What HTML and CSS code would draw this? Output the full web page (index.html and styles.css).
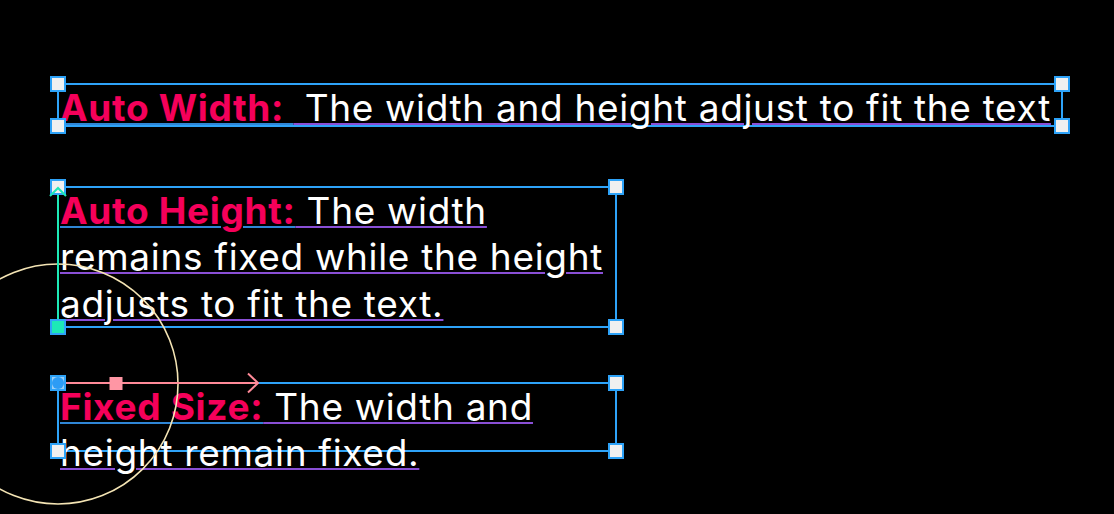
FILE: index.html
```html
<!DOCTYPE html>
<html>
<head>
<meta charset="utf-8">
<link rel="stylesheet" href="styles.css">
</head>
<body>
<div class="canvas">
  <div class="frame frame-auto-width">
    <p class="txt"><span class="label">Auto Width:&nbsp;</span><span class="body"> The width and height adjust to fit the text</span></p>
  </div>
  <div class="frame frame-auto-height">
    <p class="txt"><span class="label">Auto Height:</span><span class="body"> The width remains fixed while the height adjusts to fit the text.</span></p>
  </div>
  <div class="frame frame-fixed">
    <p class="txt"><span class="label">Fixed Size:</span><span class="body"> The width and height remain fixed.</span></p>
  </div>

  <svg class="overlay" width="1114" height="514" viewBox="0 0 1114 514">
    <circle cx="58" cy="384" r="120" fill="none" stroke="#f4e4b4" stroke-width="1.6"/>
    <line x1="58" y1="327" x2="58" y2="188" stroke="#1de9b6" stroke-width="2"/>
    <line x1="58" y1="383" x2="258" y2="383" stroke="#ff8a98" stroke-width="2"/>
    <rect class="h" x="51" y="77" width="14" height="14"/>
    <rect class="h" x="1055" y="77" width="14" height="14"/>
    <rect class="h" x="51" y="119" width="14" height="14"/>
    <rect class="h" x="1055" y="119" width="14" height="14"/>
    <rect class="h" x="51" y="180" width="14" height="14"/>
    <rect class="h" x="609" y="180" width="14" height="14"/>
    <rect class="h hg" x="51" y="320" width="14" height="14"/>
    <rect class="h" x="609" y="320" width="14" height="14"/>
    <rect class="h hb" x="51" y="376" width="14" height="14"/>
    <rect class="h" x="609" y="376" width="14" height="14"/>
    <rect class="h" x="51" y="444" width="14" height="14"/>
    <rect class="h" x="609" y="444" width="14" height="14"/>
    <polyline points="50,196 58,188 66,196" fill="none" stroke="#1de9b6" stroke-width="2"/>
    <circle cx="58" cy="383" r="6" fill="#2d9cf5"/>
    <rect x="109.5" y="377" width="13" height="13" fill="#ff96a4"/>
    <polyline points="248,373.5 258,383 248,392.5" fill="none" stroke="#ff8a98" stroke-width="2"/>
  </svg>
</div>
</body>
</html>
```

FILE: styles.css
```css
html, body {
  margin: 0;
  padding: 0;
  background: #000;
}

.canvas {
  position: relative;
  width: 1114px;
  height: 514px;
  overflow: hidden;
  box-sizing: border-box;
  padding: 83px 0 0 57px;
  display: flex;
  flex-direction: column;
  align-items: flex-start;
  font-family: Inter, "Noto Sans", sans-serif;
}

.frame {
  box-sizing: border-box;
  border: 2px solid #2ea3f8;
  position: relative;
}

.frame-auto-width {
  width: 1006px;
  height: 44px;
}

.frame-auto-height {
  width: 560px;
  height: 142px;
  margin-top: 59px;
}

.frame-fixed {
  width: 560px;
  height: 70px;
  margin-top: 54px;
}

.txt {
  margin: -0.5px 0 0 0;
  padding-left: 1px;
  font-size: 37px;
  line-height: 46.7px;
  color: #fff;
  white-space: normal;
  letter-spacing: 0.68px;
}

.label {
  color: #f5005a;
  font-weight: 700;
  text-decoration: underline;
  text-decoration-color: #2f86d6;
  text-decoration-thickness: 2px;
  text-underline-offset: 1.5px;
}

.body {
  text-decoration: underline;
  text-decoration-color: #8a4fd6;
  text-decoration-thickness: 2px;
  text-underline-offset: 1.5px;
}

.overlay {
  position: absolute;
  left: 0;
  top: 0;
  pointer-events: none;
}

.h {
  fill: #f0f0f0;
  stroke: #2ea3f8;
  stroke-width: 2;
}

.hg {
  fill: #1de9b6;
}

.hb {
  fill: #9ccff5;
}
```
